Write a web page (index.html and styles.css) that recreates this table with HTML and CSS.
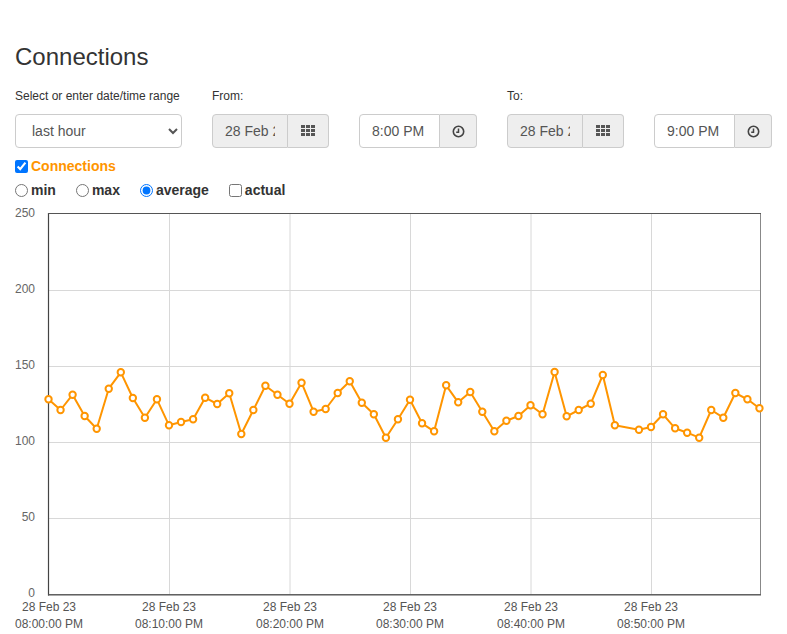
FILE: index.html
```html
<!DOCTYPE html>
<html>
<head>
<meta charset="utf-8">
<link rel="stylesheet" href="styles.css">
</head>
<body>
<div class="page">
  <h1 class="title">Connections</h1>
  <div class="controls">
    <div class="col col-range">
      <label class="lbl">Select or enter date/time range</label>
      <select class="field select">
        <option>last hour</option>
      </select>
    </div>
    <div class="col col-date">
      <label class="lbl">From:</label>
      <div class="group">
        <input class="field date" type="text" value="28 Feb 23" readonly>
        <span class="addon addon-date">
          <svg width="14" height="11" viewBox="0 0 14 11"><g fill="#555"><rect x="0" y="0" width="4" height="3"/><rect x="5" y="0" width="4" height="3"/><rect x="10" y="0" width="4" height="3"/><rect x="0" y="4" width="4" height="3"/><rect x="5" y="4" width="4" height="3"/><rect x="10" y="4" width="4" height="3"/><rect x="0" y="8" width="4" height="3"/><rect x="5" y="8" width="4" height="3"/><rect x="10" y="8" width="4" height="3"/></g></svg>
        </span>
      </div>
    </div>
    <div class="col col-time">
      <label class="lbl">&nbsp;</label>
      <div class="group">
        <input class="field time" type="text" value="8:00 PM">
        <span class="addon addon-time">
          <svg width="13" height="13" viewBox="0 0 13 13"><circle cx="6.5" cy="6.5" r="5.2" fill="none" stroke="#444" stroke-width="1.6"/><path d="M6.5 3.4V7.2H4.2" fill="none" stroke="#444" stroke-width="1.5"/></svg>
        </span>
      </div>
    </div>
    <div class="col col-date">
      <label class="lbl">To:</label>
      <div class="group">
        <input class="field date" type="text" value="28 Feb 23" readonly>
        <span class="addon addon-date">
          <svg width="14" height="11" viewBox="0 0 14 11"><g fill="#555"><rect x="0" y="0" width="4" height="3"/><rect x="5" y="0" width="4" height="3"/><rect x="10" y="0" width="4" height="3"/><rect x="0" y="4" width="4" height="3"/><rect x="5" y="4" width="4" height="3"/><rect x="10" y="4" width="4" height="3"/><rect x="0" y="8" width="4" height="3"/><rect x="5" y="8" width="4" height="3"/><rect x="10" y="8" width="4" height="3"/></g></svg>
        </span>
      </div>
    </div>
    <div class="col col-time">
      <label class="lbl">&nbsp;</label>
      <div class="group">
        <input class="field time" type="text" value="9:00 PM">
        <span class="addon addon-time">
          <svg width="13" height="13" viewBox="0 0 13 13"><circle cx="6.5" cy="6.5" r="5.2" fill="none" stroke="#444" stroke-width="1.6"/><path d="M6.5 3.4V7.2H4.2" fill="none" stroke="#444" stroke-width="1.5"/></svg>
        </span>
      </div>
    </div>
  </div>

  <div class="series">
    <label class="opt"><input type="checkbox" checked><span class="series-name">Connections</span></label>
  </div>
  <div class="modes">
    <label class="opt"><input type="radio" name="m"><b>min</b></label>
    <label class="opt"><input type="radio" name="m"><b>max</b></label>
    <label class="opt"><input type="radio" name="m" checked><b>average</b></label>
    <label class="opt"><input type="checkbox"><b>actual</b></label>
  </div>

  <svg class="chart" width="787" height="430" viewBox="0 204 787 430">
    <g stroke="#d8d8d8" stroke-width="1">
      <line x1="48" y1="290.5" x2="760" y2="290.5"/>
      <line x1="48" y1="366.5" x2="760" y2="366.5"/>
      <line x1="48" y1="442.5" x2="760" y2="442.5"/>
      <line x1="48" y1="518.5" x2="760" y2="518.5"/>
      <line x1="169.5" y1="213" x2="169.5" y2="595"/>
      <line x1="290" y1="213" x2="290" y2="595"/>
      <line x1="410.5" y1="213" x2="410.5" y2="595"/>
      <line x1="531" y1="213" x2="531" y2="595"/>
      <line x1="651.5" y1="213" x2="651.5" y2="595"/>
    </g>
    <rect x="48.5" y="213.5" width="712" height="381" fill="none" stroke="#888" stroke-width="1"/>
    <line x1="48.5" y1="213" x2="48.5" y2="595.5" stroke="#444" stroke-width="1.2"/>
    <line x1="48" y1="594.8" x2="761" y2="594.8" stroke="#555" stroke-width="1.2"/>
    <line x1="48" y1="213.5" x2="761" y2="213.5" stroke="#555" stroke-width="1"/>

    <g class="ylab" text-anchor="end">
      <text x="35" y="217">250</text>
      <text x="35" y="293">200</text>
      <text x="35" y="369">150</text>
      <text x="35" y="445">100</text>
      <text x="35" y="521">50</text>
      <text x="35" y="597">0</text>
    </g>
    <g class="xlab" text-anchor="middle">
      <text x="49" y="611">28 Feb 23</text><text x="49" y="628">08:00:00 PM</text>
      <text x="169" y="611">28 Feb 23</text><text x="169" y="628">08:10:00 PM</text>
      <text x="290" y="611">28 Feb 23</text><text x="290" y="628">08:20:00 PM</text>
      <text x="410" y="611">28 Feb 23</text><text x="410" y="628">08:30:00 PM</text>
      <text x="531" y="611">28 Feb 23</text><text x="531" y="628">08:40:00 PM</text>
      <text x="651" y="611">28 Feb 23</text><text x="651" y="628">08:50:00 PM</text>
    </g>

    <polyline fill="none" stroke="#ff9500" stroke-width="2" stroke-linejoin="round" points="48.5,399.3 60.55,410 72.6,394.7 84.65,416 96.7,428.7 108.75,388.7 120.8,372.3 132.85,398 144.9,417.7 156.95,399.3 169,425.3 181.05,422 193.1,419.3 205.15,397.7 217.2,404 229.25,393.3 241.3,434 253.35,410 265.4,385.7 277.45,394.7 289.5,403.7 301.55,382.7 313.6,411.7 325.65,409 337.7,393 349.75,381.3 361.8,402.7 373.85,414.3 385.9,437.7 397.95,419.3 410,399.7 422.05,423.3 434.1,431.3 446.15,385.3 458.2,402.3 470.25,392 482.3,411.7 494.35,431.3 506.4,420.7 518.45,416 530.5,405.3 542.55,414.3 554.6,372 566.65,416.3 578.7,410 590.75,403.7 602.8,375 614.85,425.3 638.95,429.7 651,427 663.05,414.3 675.1,428.3 687.15,432.7 699.2,437.7 711.25,410 723.3,417.7 735.35,393 747.4,399.3 759.45,408.3"/>
    <g fill="#fff" stroke="#ff9500" stroke-width="2">
      <circle cx="48.5" cy="399.3" r="3.2"/><circle cx="60.55" cy="410" r="3.2"/><circle cx="72.6" cy="394.7" r="3.2"/><circle cx="84.65" cy="416" r="3.2"/><circle cx="96.7" cy="428.7" r="3.2"/><circle cx="108.75" cy="388.7" r="3.2"/><circle cx="120.8" cy="372.3" r="3.2"/><circle cx="132.85" cy="398" r="3.2"/><circle cx="144.9" cy="417.7" r="3.2"/><circle cx="156.95" cy="399.3" r="3.2"/>
      <circle cx="169" cy="425.3" r="3.2"/><circle cx="181.05" cy="422" r="3.2"/><circle cx="193.1" cy="419.3" r="3.2"/><circle cx="205.15" cy="397.7" r="3.2"/><circle cx="217.2" cy="404" r="3.2"/><circle cx="229.25" cy="393.3" r="3.2"/><circle cx="241.3" cy="434" r="3.2"/><circle cx="253.35" cy="410" r="3.2"/><circle cx="265.4" cy="385.7" r="3.2"/><circle cx="277.45" cy="394.7" r="3.2"/>
      <circle cx="289.5" cy="403.7" r="3.2"/><circle cx="301.55" cy="382.7" r="3.2"/><circle cx="313.6" cy="411.7" r="3.2"/><circle cx="325.65" cy="409" r="3.2"/><circle cx="337.7" cy="393" r="3.2"/><circle cx="349.75" cy="381.3" r="3.2"/><circle cx="361.8" cy="402.7" r="3.2"/><circle cx="373.85" cy="414.3" r="3.2"/><circle cx="385.9" cy="437.7" r="3.2"/><circle cx="397.95" cy="419.3" r="3.2"/>
      <circle cx="410" cy="399.7" r="3.2"/><circle cx="422.05" cy="423.3" r="3.2"/><circle cx="434.1" cy="431.3" r="3.2"/><circle cx="446.15" cy="385.3" r="3.2"/><circle cx="458.2" cy="402.3" r="3.2"/><circle cx="470.25" cy="392" r="3.2"/><circle cx="482.3" cy="411.7" r="3.2"/><circle cx="494.35" cy="431.3" r="3.2"/><circle cx="506.4" cy="420.7" r="3.2"/><circle cx="518.45" cy="416" r="3.2"/>
      <circle cx="530.5" cy="405.3" r="3.2"/><circle cx="542.55" cy="414.3" r="3.2"/><circle cx="554.6" cy="372" r="3.2"/><circle cx="566.65" cy="416.3" r="3.2"/><circle cx="578.7" cy="410" r="3.2"/><circle cx="590.75" cy="403.7" r="3.2"/><circle cx="602.8" cy="375" r="3.2"/><circle cx="614.85" cy="425.3" r="3.2"/><circle cx="638.95" cy="429.7" r="3.2"/>
      <circle cx="651" cy="427" r="3.2"/><circle cx="663.05" cy="414.3" r="3.2"/><circle cx="675.1" cy="428.3" r="3.2"/><circle cx="687.15" cy="432.7" r="3.2"/><circle cx="699.2" cy="437.7" r="3.2"/><circle cx="711.25" cy="410" r="3.2"/><circle cx="723.3" cy="417.7" r="3.2"/><circle cx="735.35" cy="393" r="3.2"/><circle cx="747.4" cy="399.3" r="3.2"/><circle cx="759.45" cy="408.3" r="3.2"/>
    </g>
  </svg>
</div>
</body>
</html>
```

FILE: styles.css
```css
* { box-sizing: border-box; }
html, body { margin: 0; padding: 0; background: #fff; }
body {
  font-family: "Liberation Sans", Arial, sans-serif;
  font-size: 14px;
  color: #333;
  line-height: 20px;
  overflow: hidden;
}
.page { padding: 0 15px; width: 787px; }
.title {
  margin: 44px 0 0;
  font-size: 24px;
  font-weight: 500;
  line-height: 26px;
  color: #333;
}
.controls {
  display: flex;
  gap: 30px;
  margin-top: 18px;
}
.col { display: flex; flex-direction: column; }
.col-range { width: 167px; }
.col-date { width: 117px; }
.col-time { width: 118px; }
.lbl {
  display: block;
  font-size: 12px;
  line-height: 17px;
  height: 17px;
  margin-bottom: 9px;
  color: #333;
}
.field {
  height: 34px;
  border: 1px solid #ccc;
  font-family: "Liberation Sans", Arial, sans-serif;
  font-size: 14px;
  color: #555;
  padding: 6px 12px;
  margin: 0;
  outline: none;
}
.select {
  width: 167px;
  border-radius: 4px;
  background: #fff;
  padding-left: 12px;
}
.group { display: flex; height: 34px; }
.date {
  width: 76px;
  background: #eee;
  border-radius: 4px 0 0 4px;
}
.time {
  width: 81px;
  background: #fff;
  border-radius: 4px 0 0 4px;
}
.addon {
  display: flex;
  align-items: center;
  justify-content: center;
  background: #eee;
  border: 1px solid #ccc;
  border-left: 0;
  border-radius: 0 4px 4px 0;
  height: 34px;
}
.addon-date { width: 41px; padding-bottom: 2px; }
.addon-time { width: 37px; }
.series { margin-top: 8px; height: 20px; }
.modes { margin-top: 4px; height: 20px; display: flex; }
.opt {
  display: inline-flex;
  align-items: center;
  margin-right: 20px;
}
.opt input {
  width: 13px;
  height: 13px;
  margin: 0 3px 0 0;
}
.series-name { color: #ff9500; font-weight: bold; }
.opt b { font-weight: bold; color: #333; }
.chart {
  display: block;
  margin: 4px 0 0 -15px;
}
.ylab text { font-family: "Liberation Sans", Arial, sans-serif; font-size: 12px; fill: #666; }
.xlab text { font-family: "Liberation Sans", Arial, sans-serif; font-size: 12px; fill: #555; }
```
